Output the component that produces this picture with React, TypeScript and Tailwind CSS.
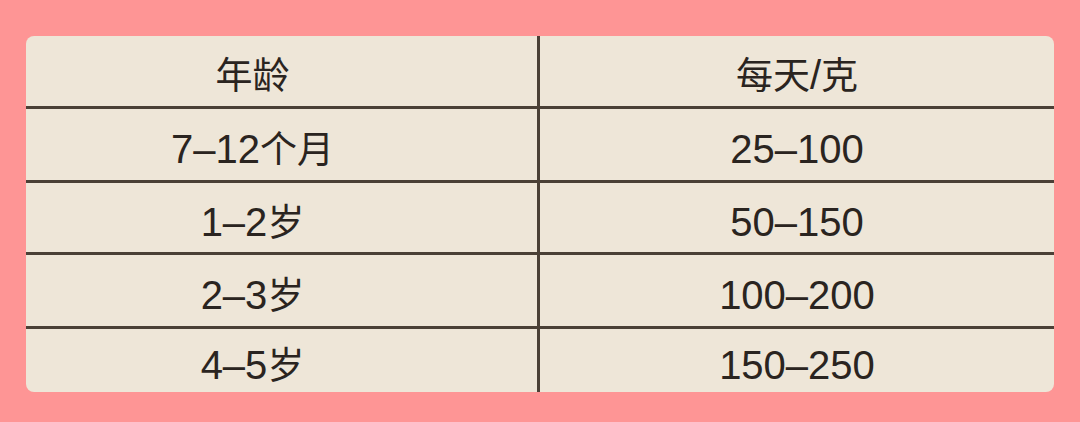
import React from "react";

const rows: [string, string, string][] = [
  ["年龄", "每天/克", "h-[73px]"],
  ["7–12个月", "25–100", "h-[74px]"],
  ["1–2岁", "50–150", "h-[72px]"],
  ["2–3岁", "100–200", "h-[74px]"],
  ["4–5岁", "150–250", "h-[63px]"],
];

function Txt({ s }: { s: string }) {
  const parts = s.match(/[\u4e00-\u9fff]+|[^\u4e00-\u9fff]+/g) || [];
  return (
    <span className="whitespace-nowrap">
      {parts.map((p, i) =>
        /[\u4e00-\u9fff]/.test(p) ? (
          <span
            key={i}
            className="text-[37px]"
            style={{ fontFamily: '"Noto Sans CJK SC", sans-serif' }}
          >
            {p}
          </span>
        ) : (
          <span key={i}>{p}</span>
        )
      )}
    </span>
  );
}

export default function App() {
  return (
    <div
      className="w-[1080px] h-[422px] bg-[#fe9595] pt-[36px] pl-[26px]"
      style={{ fontFamily: '"Liberation Sans", "Noto Sans CJK SC", sans-serif' }}
    >
      <div className="w-[1028px] h-[356px] rounded-[8px] bg-[#eee6d8] overflow-hidden flex flex-col">
        {rows.map(([a, b, h], i) => (
          <div
            key={i}
            className={`flex ${h} ${i < rows.length - 1 ? "border-b-[3px] border-[#4a4036]" : ""}`}
          >
            <div className="w-[514px] border-r-[3px] border-[#4a4036] flex items-center justify-center pr-[58px] pt-[8px] text-[40px] text-[#2a2420] leading-none">
              <Txt s={a} />
            </div>
            <div className="flex-1 flex items-center justify-center pt-[8px] text-[40px] text-[#2a2420] leading-none">
              <Txt s={b} />
            </div>
          </div>
        ))}
      </div>
    </div>
  );
}
